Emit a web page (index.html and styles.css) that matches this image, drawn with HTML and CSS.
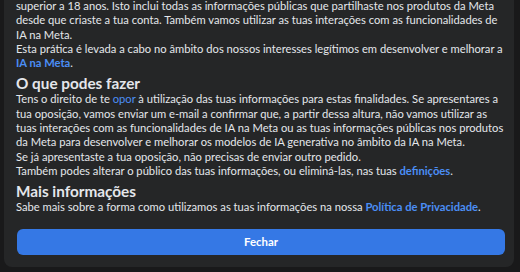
FILE: index.html
```html
<!DOCTYPE html>
<html lang="pt">
<head>
    <meta charset="UTF-8">
    <meta name="viewport" content="width=device-width, initial-scale=1.0">
    <title>IA na Meta</title>
    <link rel="stylesheet" href="styles.css">
</head>
<body>
    <div class="dialog">
        <p class="text">
            superior a 18 anos. Isto inclui todas as informações públicas que partilhaste nos produtos da Meta
            desde que criaste a tua conta. Também vamos utilizar as tuas interações com as funcionalidades de
            IA na Meta.<br>
            Esta prática é levada a cabo no âmbito dos nossos interesses legítimos em desenvolver e melhorar a
            <a href="#">IA na Meta</a>.
        </p>

        <h3 class="section-title">O que podes fazer</h3>
        <p class="text">
            Tens o direito de te <a href="#" class="plain">opor</a> à utilização das tuas informações para estas finalidades. Se apresentares a
            tua oposição, vamos enviar um e-mail a confirmar que, a partir dessa altura, não vamos utilizar as
            tuas interações com as funcionalidades de IA na Meta ou as tuas informações públicas nos produtos
            da Meta para desenvolver e melhorar os modelos de IA generativa no âmbito da IA na Meta.<br>
            Se já apresentaste a tua oposição, não precisas de enviar outro pedido.<br>
            Também podes alterar o público das tuas informações, ou eliminá-las, nas tuas <a href="#">definições</a>.
        </p>

        <h3 class="section-title">Mais informações</h3>
        <p class="text">
            Sabe mais sobre a forma como utilizamos as tuas informações na nossa <a href="#">Política de Privacidade</a>.
        </p>

        <button class="close-btn" type="button">Fechar</button>
    </div>
</body>
</html>
```
FILE: styles.css
```css
body {
    background-color: #19191a;
    color: #e4e6eb;
    font-family: Lato, "Open Sans", Arial, sans-serif;
    margin: 0;
    padding: 0 6px 0 4px;
}
.dialog {
    margin-top: -10px;
    padding: 9px 10px 12px 12px;
    background-color: #252627;
    border-radius: 0 0 8px 8px;
}
.text {
    margin: 0;
    font-size: 11.2px;
    line-height: 14.3px;
}
.text a {
    color: #4b8ef5;
    font-weight: 700;
    text-decoration: none;
}
.text a.plain {
    font-weight: 400;
}
.section-title {
    margin: 5px 0 0;
    font-size: 15.3px;
    line-height: 17px;
    font-weight: 700;
}
.close-btn {
    display: block;
    width: 100%;
    height: 26px;
    margin-top: 14px;
    margin-left: 1px;
    background-color: #3578e5;
    color: #ffffff;
    border: none;
    border-radius: 6px;
    font-family: Lato, "Open Sans", Arial, sans-serif;
    font-size: 11.4px;
    font-weight: 700;
}
```
